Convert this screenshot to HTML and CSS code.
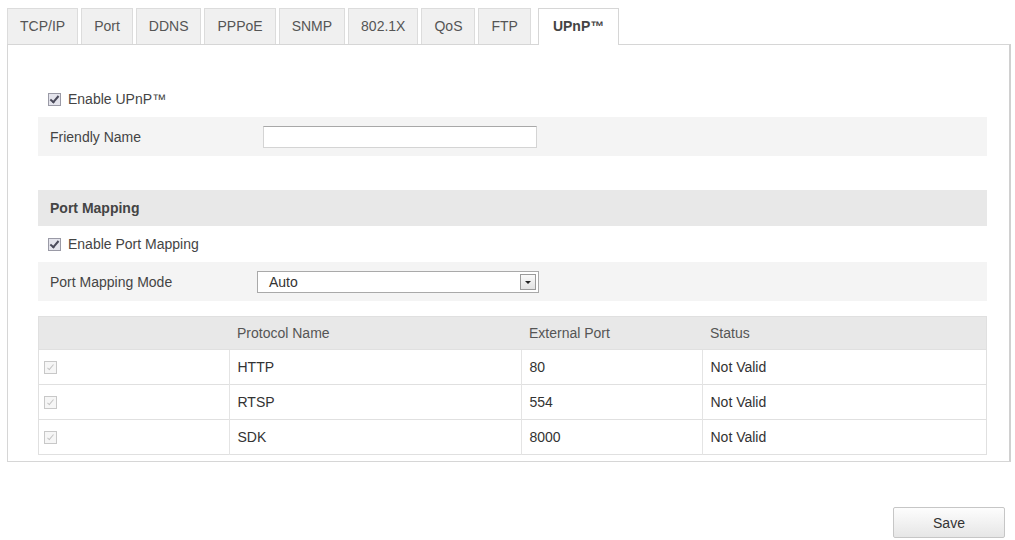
FILE: index.html
```html
<!DOCTYPE html>
<html lang="en">
<head>
  <meta charset="UTF-8">
  <title>Network - UPnP</title>
  <link rel="stylesheet" href="styles.css">
</head>
<body>
  <div class="page">
    <ul class="tabs">
      <li class="tab">TCP/IP</li>
      <li class="tab">Port</li>
      <li class="tab">DDNS</li>
      <li class="tab">PPPoE</li>
      <li class="tab">SNMP</li>
      <li class="tab">802.1X</li>
      <li class="tab">QoS</li>
      <li class="tab">FTP</li>
      <li class="tab active">UPnP™</li>
    </ul>

    <div class="panel">
      <div class="check-row first">
        <span class="check on"></span>
        <span>Enable UPnP™</span>
      </div>
      <div class="field-row">
        <label class="field-label">Friendly Name</label>
        <input type="text" class="text-input">
      </div>

      <div class="section-title">Port Mapping</div>
      <div class="check-row">
        <span class="check on"></span>
        <span>Enable Port Mapping</span>
      </div>
      <div class="field-row">
        <label class="field-label">Port Mapping Mode</label>
        <div class="select">
          <span>Auto</span>
          <span class="select-btn"></span>
        </div>
      </div>

      <table class="map-table">
        <thead>
          <tr>
            <th class="col-check"></th>
            <th class="col-proto">Protocol Name</th>
            <th class="col-port">External Port</th>
            <th>Status</th>
          </tr>
        </thead>
        <tbody>
          <tr>
            <td><span class="check disabled"></span></td>
            <td>HTTP</td>
            <td>80</td>
            <td>Not Valid</td>
          </tr>
          <tr>
            <td><span class="check disabled"></span></td>
            <td>RTSP</td>
            <td>554</td>
            <td>Not Valid</td>
          </tr>
          <tr>
            <td><span class="check disabled"></span></td>
            <td>SDK</td>
            <td>8000</td>
            <td>Not Valid</td>
          </tr>
        </tbody>
      </table>
    </div>

    <div class="actions">
      <button class="save-btn">Save</button>
    </div>
  </div>
</body>
</html>
```

FILE: styles.css
```css
body {
  margin: 0;
  font-family: "Liberation Sans", Arial, sans-serif;
  font-size: 14px;
  color: #333;
  background: #fff;
}
.page {
  padding: 8px 4px 0 7px;
}
.tabs {
  list-style: none;
  margin: 0;
  padding: 0;
  display: flex;
  gap: 3px;
  height: 36px;
}
.tab {
  border: 1px solid #dcdcdc;
  border-bottom: none;
  background: #f0f0f0;
  color: #555;
  padding: 0 12px;
  line-height: 35px;
  font-size: 14px;
}
.tab.active {
  background: #fff;
  color: #444;
  font-weight: bold;
  padding: 0 14px;
  margin-bottom: -1px;
  height: 36px;
  position: relative;
  z-index: 1;
  border-color: #d6d6d6;
  margin-left: 4px;
}
.panel {
  border: 1px solid #d6d6d6;
  border-right: 2px solid #d0d0d0;
  height: 418px;
  box-sizing: border-box;
  padding: 0 22px 0 30px;
}
.check-row {
  display: flex;
  align-items: center;
  height: 36px;
  padding-left: 10px;
  color: #444;
}
.check-row.first {
  margin-top: 36px;
}
.check {
  width: 11px;
  height: 11px;
  border: 1px solid #9a9aa6;
  background: #e4e4ec;
  margin-right: 7px;
  position: relative;
}
.check.on::after {
  content: "";
  position: absolute;
  left: 3px;
  top: 0;
  width: 3px;
  height: 7px;
  border: solid #4a4a5a;
  border-width: 0 2px 2px 0;
  transform: rotate(40deg);
}
.check.disabled {
  border-color: #c8c8c8;
  background: #f6f6f6;
}
.check.disabled::after {
  content: "";
  position: absolute;
  left: 4px;
  top: 1px;
  width: 2px;
  height: 6px;
  border: solid #c4c4c4;
  border-width: 0 1px 1px 0;
  transform: rotate(40deg);
}
.field-row {
  display: flex;
  align-items: center;
  height: 39px;
  background: #f4f4f4;
  padding-left: 12px;
}
.field-label {
  width: 213px;
  color: #444;
}
.text-input {
  width: 274px;
  height: 22px;
  box-sizing: border-box;
  border: 1px solid #d4d4d4;
  border-top-color: #a8a8a8;
  background: #fff;
  margin: 0;
}
.section-title {
  margin-top: 34px;
  height: 36px;
  line-height: 36px;
  background: #e8e8e8;
  padding-left: 12px;
  font-weight: bold;
  color: #444;
}
.field-row .select {
  margin-left: -6px;
}
.select {
  width: 282px;
  height: 22px;
  box-sizing: border-box;
  border: 1px solid #a9a9a9;
  background: #fff;
  display: flex;
  align-items: center;
  justify-content: space-between;
  padding-left: 11px;
  padding-right: 2px;
}
.select-btn {
  width: 14px;
  height: 14px;
  border: 1px solid #9a9a9a;
  background: linear-gradient(#fafafa, #e2e2e2);
  position: relative;
}
.select-btn::after {
  content: "";
  position: absolute;
  left: 4px;
  top: 6px;
  border: 3px solid transparent;
  border-top: 3px solid #222;
}
.map-table {
  margin-top: 15px;
  width: 100%;
  border-collapse: collapse;
  border: 1px solid #e0e0e0;
}
.map-table th {
  background: #e8e8e8;
  font-weight: normal;
  text-align: left;
  height: 32px;
  padding: 0 8px;
  color: #555;
}
.map-table td {
  height: 34px;
  padding: 0 8px;
  border-top: 1px solid #e0e0e0;
  border-left: 1px solid #e4e4e4;
}
.map-table td:first-child {
  border-left: none;
  padding-left: 5px;
}
.map-table td .check {
  display: block;
}
.col-check {
  width: 174px;
}
.col-proto {
  width: 276px;
}
.col-port {
  width: 165px;
}
.actions {
  display: flex;
  justify-content: flex-end;
  padding: 45px 6px 0 0;
}
.save-btn {
  width: 112px;
  height: 31px;
  border: 1px solid #c6c6c6;
  border-radius: 2px;
  background: linear-gradient(#fdfdfd, #e6e6e6);
  font-family: "Liberation Sans", Arial, sans-serif;
  font-size: 14px;
  color: #333;
}
```
